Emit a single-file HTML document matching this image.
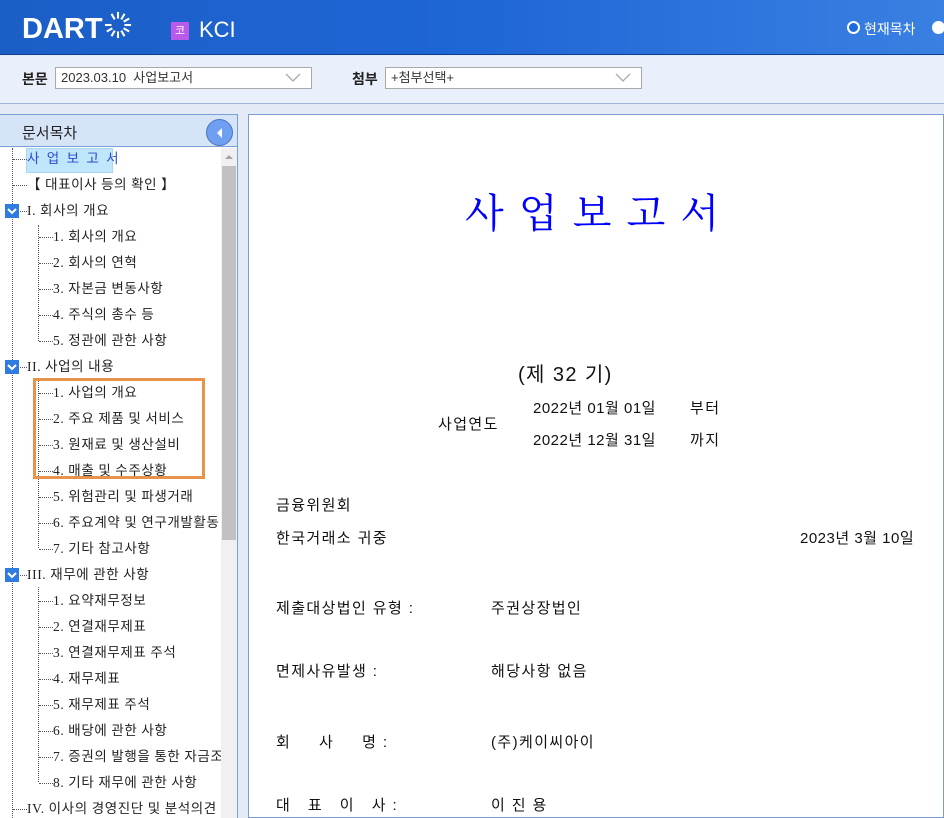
<!DOCTYPE html>
<html><head><meta charset="utf-8"><style>
*{margin:0;padding:0;box-sizing:border-box}
body{width:944px;height:818px;overflow:hidden;background:#e4ebf7;font-family:"Liberation Sans","Noto Sans CJK KR",sans-serif;position:relative}
.a{position:absolute;white-space:nowrap}
#hdr{left:0;top:0;width:944px;height:55px;background:linear-gradient(90deg,#1b5ec6 0%,#1f66d6 50%,#3a80e2 100%);border-bottom:1px solid #0e3f8c}
#tb{left:0;top:56px;width:944px;height:48px;background:#eaf0fb;border-bottom:1px solid #9fb3d4}
.sel{position:absolute;height:22px;background:#fff;border:1px solid #a9a9a9;font-size:13px;color:#333;line-height:20px;padding-left:5px}
.sel svg{position:absolute;right:10px;top:5px}
#lp{left:0;top:114px;width:238px;height:704px;background:#fff;border-right:1px solid #7a9fd6;border-top:1px solid #7a9fd6}
#lh{left:0;top:114px;width:237px;height:33px;background:#d6e4f8;border-bottom:1px solid #7a9fd6;border-top:1px solid #7a9fd6}
#rp{left:248px;top:114px;width:696px;height:704px;background:#fff;border:1px solid #7a9fd6}
.t{position:absolute;font-family:"Liberation Serif","Noto Sans CJK KR",serif;font-size:13.5px;letter-spacing:0.6px;color:#222;line-height:16px;white-space:nowrap}
.hl{position:absolute;border-top:1px dotted #555;height:0}
.vl{position:absolute;border-left:1px dotted #555;width:0}
.ex{position:absolute;width:14px;height:14px;background:#2f7be0}
.d{position:absolute;font-size:15px;letter-spacing:1.4px;color:#111;white-space:nowrap;font-family:"Liberation Sans","Noto Sans CJK KR",sans-serif}
</style></head><body>
<div id="hdr" class="a">
 <div class="a" style="left:22px;top:13px;font-size:29px;font-weight:bold;color:#fff;letter-spacing:0px">DART</div>
 <svg class="a" style="left:104px;top:11px" width="28" height="28" viewBox="0 0 30 30"><g stroke="#fff" stroke-width="2.2">
 <line x1="15" y1="15" x2="15" y2="1"/><line x1="15" y1="15" x2="22" y2="3"/><line x1="15" y1="15" x2="27" y2="8"/><line x1="15" y1="15" x2="29" y2="15"/><line x1="15" y1="15" x2="27" y2="22"/><line x1="15" y1="15" x2="22" y2="27"/><line x1="15" y1="15" x2="15" y2="29"/><line x1="15" y1="15" x2="8" y2="27"/><line x1="15" y1="15" x2="3" y2="22"/><line x1="15" y1="15" x2="8" y2="3"/><line x1="15" y1="15" x2="1" y2="15"/></g><circle cx="15" cy="15" r="7" fill="#1c5fc8"/></svg>
 <div class="a" style="left:171px;top:22px;width:18px;height:18px;background:#b95be8;color:#fff;font-size:11px;text-align:center;line-height:18px">코</div>
 <div class="a" style="left:199px;top:17px;font-size:22px;color:#fff">KCI</div>
 <div class="a" style="left:847px;top:21px;width:13px;height:13px;border:2px solid #fff;border-radius:50%;background:#1a6ae0"></div>
 <div class="a" style="left:864px;top:19px;font-size:14px;color:#fff">현재목차</div>
 <div class="a" style="left:932px;top:21px;width:13px;height:13px;border-radius:50%;background:#fff"></div>
</div>
<div id="tb" class="a">
 <div class="a" style="left:22px;top:13px;font-size:14px;font-weight:bold;color:#222">본문</div>
 <div class="sel" style="left:55px;top:11px;width:257px">2023.03.10 &nbsp;사업보고서<svg width="16" height="10"><polyline points="1,1 8,8 15,1" fill="none" stroke="#aaa" stroke-width="1.3"/></svg></div>
 <div class="a" style="left:352px;top:13px;font-size:14px;font-weight:bold;color:#222">첨부</div>
 <div class="sel" style="left:385px;top:11px;width:257px">+첨부선택+<svg width="16" height="10"><polyline points="1,1 8,8 15,1" fill="none" stroke="#aaa" stroke-width="1.3"/></svg></div>
</div>
<div id="lp" class="a"></div>
<div id="lh" class="a">
 <div class="a" style="left:22px;top:7px;font-size:15px;color:#222">문서목차</div>
 <div class="a" style="left:206px;top:4px;width:27px;height:27px;border-radius:50%;background:#6f9ff0;border:1px solid #4a74c0"></div>
 <svg class="a" style="left:214px;top:11px" width="10" height="14"><polygon points="8,2 3,7 8,12" fill="#fff"/></svg>
</div>
<div class="a" style="left:221px;top:148px;width:16px;height:670px;background:#f0f0f0"></div>
<svg class="a" style="left:223px;top:153px" width="12" height="8"><polygon points="2,6 6,2 10,6" fill="#a3a3a3"/></svg>
<div class="a" style="left:222px;top:166px;width:14px;height:374px;background:#c1c1c1"></div>
<div class="a" style="left:26px;top:148px;width:87px;height:25px;background:#bfe6fb;border:1px solid #a8d8f0"></div>
<div class="vl" style="left:12px;top:148px;height:670px"></div>
<div class="vl" style="left:38px;top:225px;height:116px"></div>
<div class="vl" style="left:38px;top:380px;height:168px"></div>
<div class="vl" style="left:38px;top:587px;height:195px"></div>
<div id="tree"></div>
<div class="a" style="left:33px;top:378px;width:172px;height:101px;border:3px solid #e8924a"></div>
<div id="rp" class="a"></div>
<div class="a" style="left:465px;top:182px;font-family:'Noto Serif CJK SC','Liberation Serif',serif;font-size:40px;color:#0000ff;letter-spacing:2.5px">사 업 보 고 서</div>
<div class="d" style="left:518px;top:358px;font-size:20px">(제 32 기)</div>
<div class="d" style="left:438px;top:413px">사업연도</div>
<div class="d" style="left:533px;top:397px;letter-spacing:0.5px">2022년 01월 01일</div>
<div class="d" style="left:690px;top:397px">부터</div>
<div class="d" style="left:533px;top:429px;letter-spacing:0.5px">2022년 12월 31일</div>
<div class="d" style="left:690px;top:429px">까지</div>
<div class="d" style="left:276px;top:494px">금융위원회</div>
<div class="d" style="left:276px;top:527px">한국거래소 귀중</div>
<div class="d" style="left:800px;top:527px;letter-spacing:0.5px">2023년 3월 10일</div>
<div class="d" style="left:276px;top:597px">제출대상법인 유형 :</div>
<div class="d" style="left:491px;top:597px">주권상장법인</div>
<div class="d" style="left:276px;top:660px">면제사유발생 :</div>
<div class="d" style="left:491px;top:660px">해당사항 없음</div>
<div class="d" style="left:276px;top:731px">회 &nbsp; &nbsp; 사 &nbsp; &nbsp; 명 :</div>
<div class="d" style="left:491px;top:731px">(주)케이씨아이</div>
<div class="d" style="left:276px;top:794px">대 &nbsp; 표 &nbsp; 이 &nbsp; 사 :</div>
<div class="d" style="left:491px;top:794px">이 진 용</div>
<script>
var rows=[[0,"사 업 보 고 서"],[0,"【 대표이사 등의 확인 】"],[0,"I. 회사의 개요",1],[1,"1. 회사의 개요"],[1,"2. 회사의 연혁"],[1,"3. 자본금 변동사항"],[1,"4. 주식의 총수 등"],[1,"5. 정관에 관한 사항"],[0,"II. 사업의 내용",1],[1,"1. 사업의 개요"],[1,"2. 주요 제품 및 서비스"],[1,"3. 원재료 및 생산설비"],[1,"4. 매출 및 수주상황"],[1,"5. 위험관리 및 파생거래"],[1,"6. 주요계약 및 연구개발활동"],[1,"7. 기타 참고사항"],[0,"III. 재무에 관한 사항",1],[1,"1. 요약재무정보"],[1,"2. 연결재무제표"],[1,"3. 연결재무제표 주석"],[1,"4. 재무제표"],[1,"5. 재무제표 주석"],[1,"6. 배당에 관한 사항"],[1,"7. 증권의 발행을 통한 자금조달에 관한 사항"],[1,"8. 기타 재무에 관한 사항"],[0,"IV. 이사의 경영진단 및 분석의견"]];
var h="";rows.forEach(function(r,i){var cy=159+i*26;var x=r[0]?53:27;var lx=r[0]?39:13;
h+='<div class="hl" style="left:'+lx+'px;top:'+cy+'px;width:'+(x-lx)+'px"></div>';
if(r[2])h+='<div class="ex" style="left:5px;top:'+(cy-7)+'px"><svg width="14" height="14"><polyline points="3,5 7,9 11,5" fill="none" stroke="#fff" stroke-width="2"/></svg></div>';
h+='<div class="t" style="left:'+x+'px;top:'+(cy-8)+'px;max-width:'+(221-x)+'px;overflow:hidden;'+(i==0?'color:#2a4bd0;letter-spacing:2px':'')+'">'+r[1]+'</div>';});
document.getElementById('tree').innerHTML=h;
</script>
</body></html>
